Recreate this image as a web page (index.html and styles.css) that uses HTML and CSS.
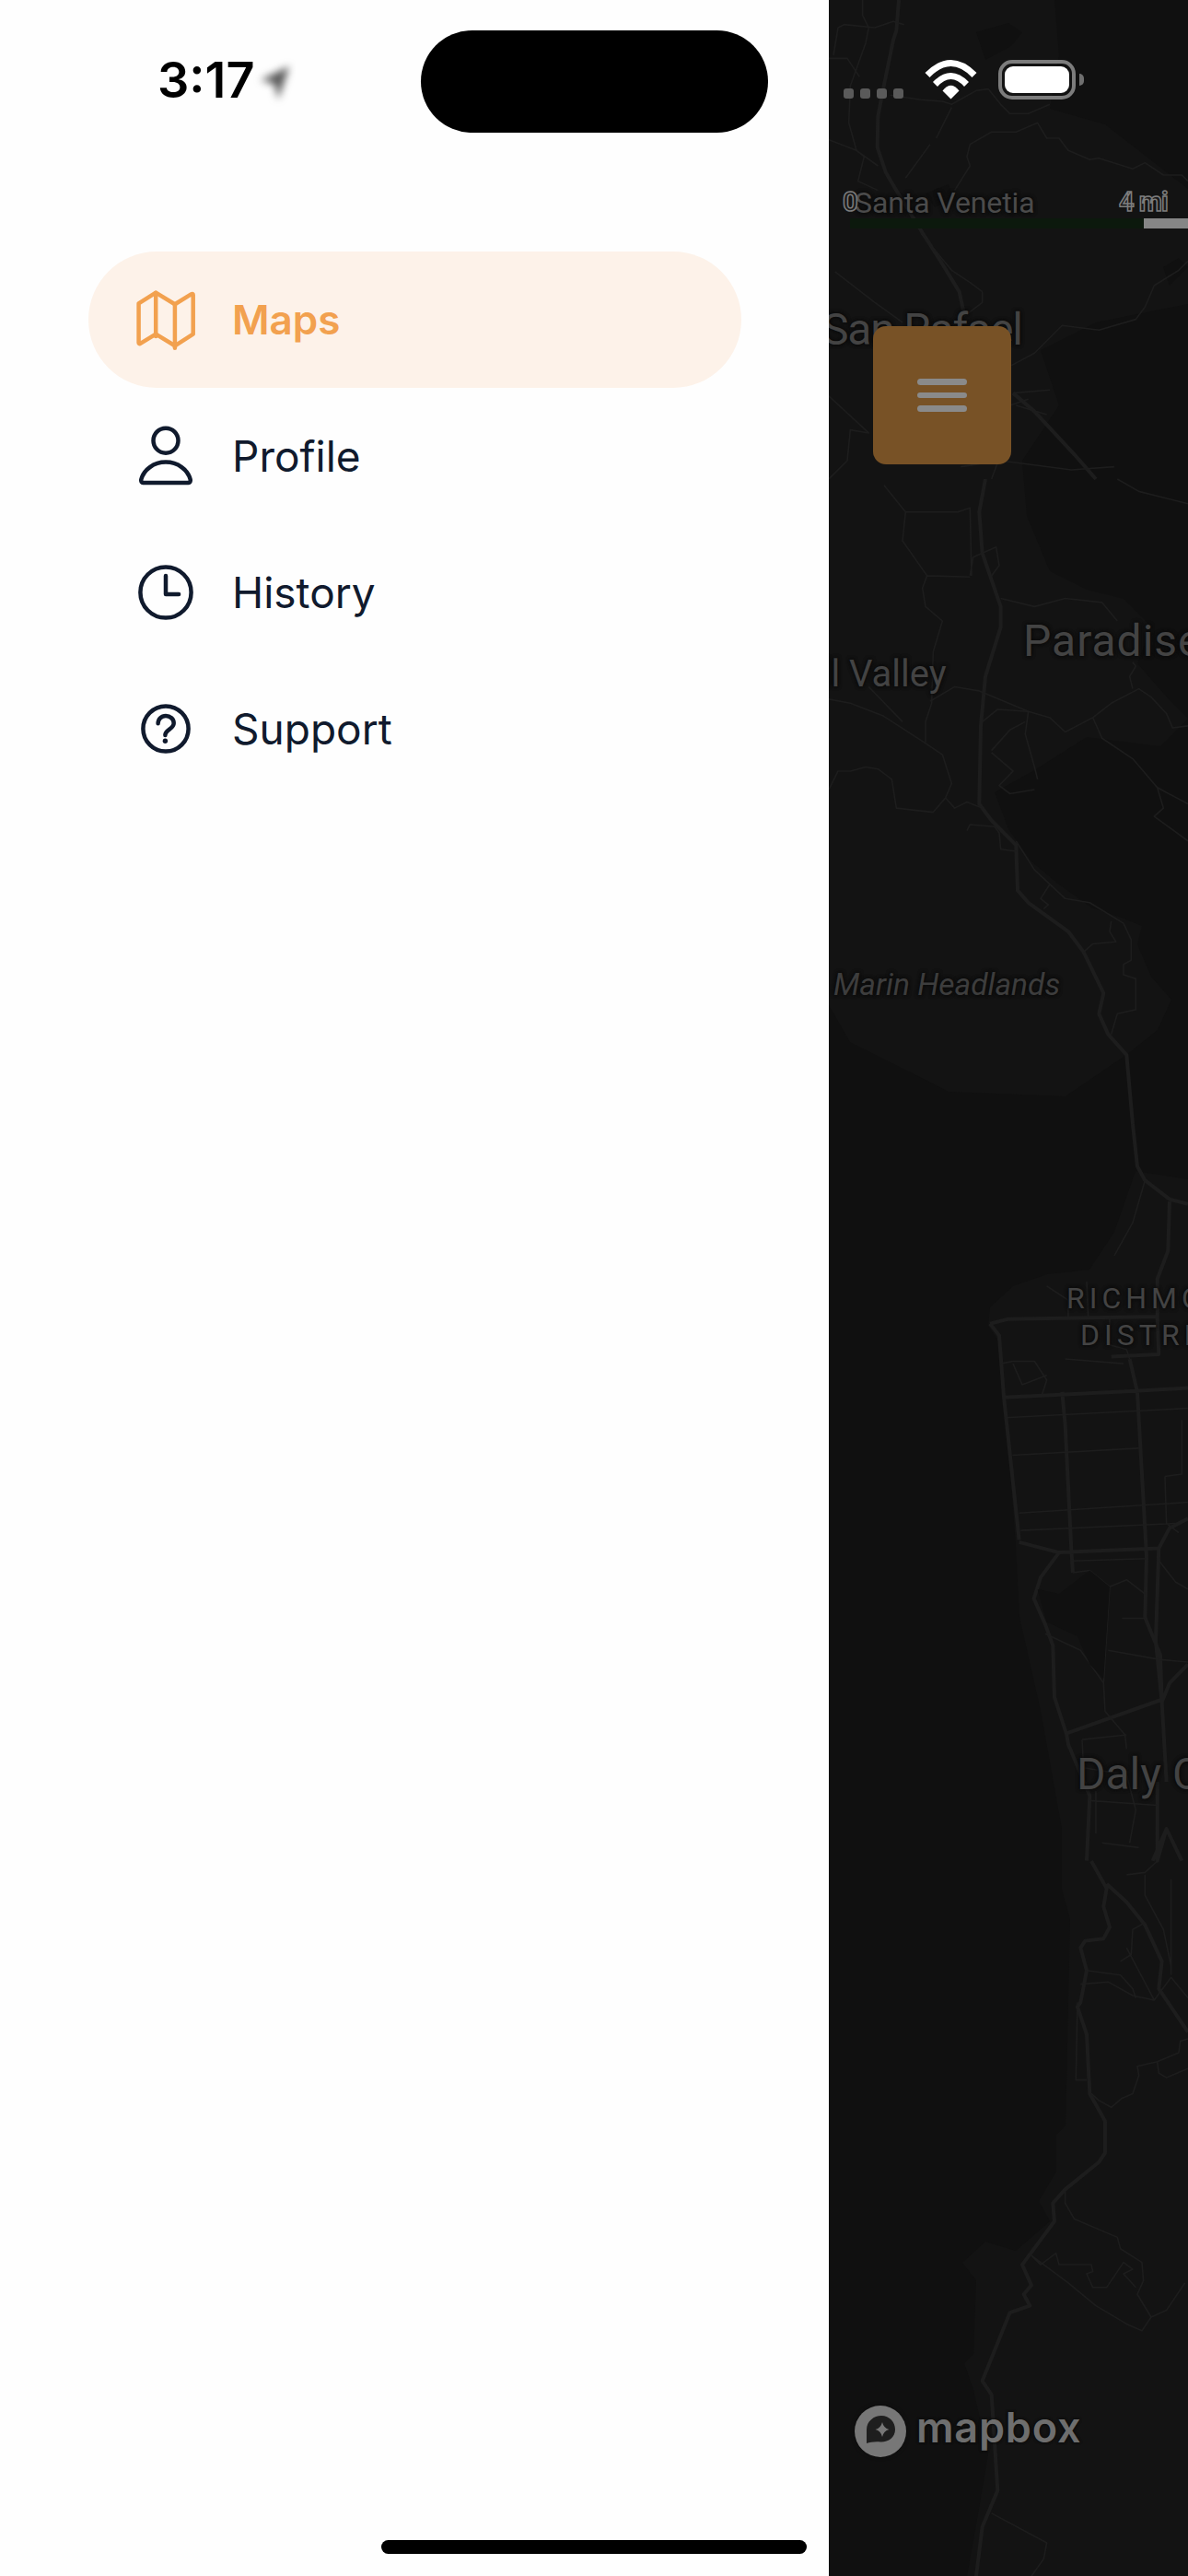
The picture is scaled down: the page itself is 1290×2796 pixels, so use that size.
FILE: index.html
```html
<!DOCTYPE html>
<html lang="en">
<head>
<meta charset="utf-8">
<title>Maps</title>
<link rel="stylesheet" href="styles.css">
</head>
<body>
<div class="app">
  <aside class="drawer">
    <div class="clock">
      <span class="time">3:17</span>
      <svg class="loc" width="50" height="56" viewBox="0 0 50 56"><path class="loc-arrow" d="M43 10 L12 25 L27 29 L31 46 Z"/></svg>
    </div>
    <nav class="menu">
      <a class="item active">
        <svg class="ico" viewBox="0 0 24 24"><g transform="translate(0 .33)"><path d="M2.2 5.800 8.400 1.900l6.900 4.200 6-3.700c.3-.2.600 0 .6.300v14.200l-6.600 4.200-6.900-4.200-5.600 3.400c-.3.2-.6 0-.6-.3z"/><path d="M8.400 1.900v15.800M15.300 6.100v15.800"/></g></svg>
        <span>Maps</span>
      </a>
      <a class="item">
        <svg class="ico" viewBox="0 0 24 24"><circle cx="12" cy="6.400" r="4.500"/><path d="M12 14.200c-4.400 0-8 2.800-8.900 6.300-.1.700.2 1.200.7 1.200h16.400c.5 0 .8-.5.700-1.200-.9-3.500-4.500-6.300-8.900-6.300z"/></svg>
        <span>Profile</span>
      </a>
      <a class="item">
        <svg class="ico" viewBox="0 0 24 24"><circle cx="12" cy="12" r="9.200"/><path d="M12 6v6.700h4.700"/></svg>
        <span>History</span>
      </a>
      <a class="item">
        <svg class="ico" viewBox="0 0 24 24"><circle cx="12" cy="12" r="8.200"/><path d="M9.200 10.100c0-1.600 1.200-2.800 2.800-2.800s2.900 1.200 2.900 2.700c0 2.100-3.100 2.300-3.100 4.300"/><circle class="dot" cx="11.800" cy="16.400" r=".9"/></svg>
        <span>Support</span>
      </a>
    </nav>
  </aside>

  <main class="map">
    <svg class="base" viewBox="900 0 390 2796" preserveAspectRatio="none">
      <path class="land" d="M900 0H1145L1150 60 1140 118 1200 135 1290 205V330L1190 350 1130 380 1150 440 1110 500 1115 560 1140 620 1180 640 1220 650 1250 680 1235 720 1270 760 1290 780 1260 810 1180 800 1125 835 1080 860 1095 900 1120 935 1150 960 1185 985 1215 995 1240 1005 1235 1025 1250 1060 1272 1085 1257 1118 1223 1145 1157 1190 1030 1185 987 1163 923 1131 900 1091Z"/>
      <path class="land" d="M1233 1271 1210 1337 1183 1378 1137 1383 1100 1396 1075 1419 1073 1439 1087 1460 1103 1679 1107 1755 1130 1857 1153 1985 1153 2050 1162 2084 1157 2307 1147 2317 1147 2357 1128 2389 1140 2411 1103 2443 1070 2433 1045 2456 1060 2475 1057 2555 1047 2565 1057 2594 1073 2664 1063 2723 1050 2796H1290V1280Z"/>
      <path class="park" d="M1060 35 1095 25 1110 35 1098 50 1070 65Z"/>
      <path class="park" d="M1263 290 1280 280 1290 290 1270 310Z"/>
      <path class="park" d="M1005 210 1030 200 1035 215 1015 225Z"/>

      <g transform="translate(890 0) scale(.3333 .3333)">
        <path class="rd" d="M258 0 250 100 240 130 205 300 190 380 188 480 215 560 250 620 330 750 400 860 455 950 470 1020"/>
        <path class="rd" d="M630 1280 700 1340 830 1480 900 1560"/>
        <path class="rt" d="M30 190H90L130 250M140 0V50L160 90 150 140 100 280 95 400 120 490 145 510 125 590 190 620M60 90 80 80 180 90 240 70 275 80M60 90 45 180M30 455 120 490 190 540"/>
        <path class="rt" d="M230 310 330 325 400 330 430 340 510 295 550 290 590 340 620 370H680L750 340"/>
        <path class="rt" d="M490 470 560 430H640L710 400 740 450H780L810 490 880 520 910 515 1020 550 1060 530 1120 570H1180L1200 590M490 470 480 510 490 540 440 620M380 450 400 410 430 350M360 470 280 580"/>
        <path class="rt" d="M1200 850 1170 880 1090 930 1060 1000 1030 1040 910 1075 790 1060 730 1120 700 1150 625 1190M530 950 490 920 430 880 380 820 330 760M50 885 180 985 270 1050M530 950V985L470 1030"/>
        <path class="rt" d="M30 1290 160 1410 100 1400 90 1500 30 1560M590 1480 560 1560M460 1520 590 1500 820 1530 960 1520M630 1280 750 1270M640 1320 740 1350M620 1320 680 1300"/>
      </g>

      <g transform="translate(890 520) scale(.3333 .4464)">
        <path class="rd" d="M540 0 520 80 530 180 590 310V360L540 480 525 600 520 790 560 830 640 890 645 1000 680 1030 810 1100 860 1150 925 1250 910 1300 940 1350 1000 1400 1020 1568"/>
        <path class="rt" d="M210 15 280 80 270 150 350 235 490 238M280 80H450L490 70 495 235M490 235 500 190 575 165 585 210 560 235M350 235 335 265 345 310 400 345 370 420 365 545 345 590V640"/>
        <path class="rt" d="M30 535 100 545 205 575 340 640 400 670 430 740 410 775 370 810 250 800 235 730 190 705 150 700 100 710H60L30 755M160 505 270 590"/>
        <path class="rt" d="M360 540 440 505 520 515 680 565 750 580 800 615 890 580 950 545 1040 510 1080 530 1130 570 1150 605 1200 600M890 580 920 630 1020 680 1100 750 1200 790M1100 750 1120 800 1090 820 1200 880"/>
        <path class="rt" d="M590 290 700 310 800 290 920 300 970 345M1020 445 1030 455 1010 480 1020 510M530 590 580 560 680 565 670 620 700 700 710 730M560 660 620 610 670 590M560 665 630 710 585 745 620 765 700 755"/>
        <path class="rt" d="M410 775 440 800 480 785 530 800M480 855 490 840 570 845 585 860 590 900 640 905M640 880 700 950 800 1020 880 1030 990 1080 1015 1120V1170L990 1180V1205L1030 1215V1290L970 1300 950 1350M950 1075 945 1100 965 1125 890 1130 860 1150M750 985 720 1020 745 1035 730 1045M970 0 1040 30 1200 60"/>
      </g>

      <g transform="translate(890 1220) scale(.3333 .51)">
        <path class="rd" d="M1020 0 1035 90 1060 120 1140 160 1200 170M1140 165 1135 270 1100 330V410M555 425 615 415 1100 410 1105 490 950 495M555 425 585 450 600 580 650 885M600 582 1030 568 1200 562M1010 500 1035 570 1065 920 1060 1050 1110 1130 1115 1230 1130 1400M790 570 800 640 820 905 825 955M650 890 780 912 1105 903 1140 860 1200 840M780 912 720 965 698 1010 735 1065 760 1110 765 1220 805 1300 810 1320 880 1430 870 1568M805 1297 1115 1225M1105 903 1095 1100 1115 1230M1115 1230 1140 1190 1200 1150M1100 1400V1568L1130 1500 1180 1568M1130 1500 1085 1568"/>
        <path class="rt" d="M605 625 1200 605M628 705 1040 690M650 828 1200 805M655 865 1160 850M820 930 1065 925M825 955 880 950 945 985 925 1190 930 1250 995 1300 1000 1330M945 985 1000 970 1060 1000M985 1052H1060M735 1085 850 1120 925 1190M940 1120 1110 1140 1200 1145M1125 750 1180 745V630M1125 750 1130 850 1170 870M1100 925 1160 975 1200 990M630 505H700L740 545 725 575M630 510 660 555 740 535M590 510 630 505M800 500 990 510M1010 500 1000 480 945 470V410M1060 120 1020 210 960 280M740 345 810 375V410M870 335 875 410M855 1310 1000 1300M855 1310 860 1370 1000 1385M900 1420V1510M1000 1385 1030 1460 1010 1530M880 1440 1100 1450M920 1530 1040 1540"/>
        <path class="park" d="M710 990 780 1000 880 950 945 985 925 1180 880 1150 840 1090 740 1060Z"/>
      </g>

      <g transform="translate(890 2020) scale(.3333 .495)">
        <path class="rd" d="M885 0 935 60 925 100 945 145 925 170 865 175 850 190 870 240 850 310 840 320 870 380 880 510 930 570V640L910 660 800 720 760 750 765 790 660 885 690 930 665 950 685 975 620 990 530 1140 560 1170 580 1380 530 1460 510 1568M935 50 1000 90 1060 140 1115 220 1105 280 1200 375"/>
        <path class="rt" d="M1000 30 1060 25 1100 0M1060 30V75L1120 150 1145 230M870 240 980 250 1020 280 1030 300M980 220 1015 205 1020 150 1060 135M850 270 940 265 1020 295 1090 305 1145 255 1200 300M840 310 835 480H870M1145 40V250M1000 190 1090 305M1200 390 1175 395 1170 420 1100 440 1035 450 1040 470 1020 510 985 520 950 540 910 525 885 510M1100 440 1105 465 1130 475 1200 455M800 725V750L830 785 970 825 980 850 1050 880 1055 920 1035 950 1080 1000 1050 1030 1000 1015 900 975 810 925 690 865M690 865 720 885 770 860 780 885H885L890 900 870 905 890 935H935L990 880 1020 895 990 905 1030 935M1080 1000 1130 985 1190 925M560 1430 740 1495 730 1530 690 1568"/>
      </g>
    </svg>

    <div class="label santa">Santa Venetia</div>
    <div class="label rafael">San Rafael</div>
    <div class="label paradise">Paradise</div>
    <div class="label mill">Mill Valley</div>
    <div class="label marin">Marin Headlands</div>
    <div class="label richmond">RICHMOND<br>DISTRICT</div>
    <div class="label daly">Daly City</div>

    <div class="scale-num zero">0</div>
    <div class="scale-num four">4 mi</div>
    <div class="scale-bar"><span class="scale-dark"></span><span class="scale-light"></span></div>

    <div class="signal"><i></i><i></i><i></i><i></i></div>
    <svg class="wifi" width="57" height="43" viewBox="0 0 57 43"><path d="M.5 14Q28.500-14 56.500 14L51.500 19Q28.500-5 5.500 19Z"/><path d="M9 24Q28.500 4 48 24L43 29Q28.500 13 14 29Z"/><path d="M19.500 33.500Q28.500 22 37.500 33.500L28.500 42.500Z"/></svg>
    <div class="battery"><span class="battery-fill"></span></div>
    <span class="battery-cap"></span>

    <button class="burger" aria-label="Menu"><i></i><i></i><i></i></button>

    <div class="mapbox">
      <svg class="mb-mark" width="56" height="56" viewBox="0 0 56 56"><circle class="mb-disc" cx="28" cy="28" r="28"/><path class="mb-pin" d="M13 41V26C13 17 21 11 29 11 38 11 44 18 44 26 44 35 36 40 28 39.500 21 39 17 40 13 41Z"/><path class="mb-disc" d="M30 18Q31.500 24.500 37.500 26 31.500 27.500 30 34 28.500 27.500 22.500 26 28.500 24.500 30 18Z"/></svg>
      <span class="mb-word">mapbox</span>
    </div>
  </main>

  <div class="island"></div>
  <div class="home"></div>
</div>
</body>
</html>
```

FILE: styles.css
```css
* { box-sizing: border-box; }
html, body { margin: 0; padding: 0; background: #fff; }
body { width: 1290px; height: 2796px; overflow: hidden; font-family: Inter, "Liberation Sans", sans-serif; }
.app { position: relative; display: flex; width: 1290px; height: 2796px; }

.drawer { width: 900px; flex: none; background: #fefefe; padding: 0 95px 0 96px; }
.clock { display: flex; align-items: center; height: 273px; padding: 0 0 99px 75px; }
.time { font-size: 54px; line-height: 62px; font-weight: 600; color: #000; letter-spacing: 0; }
.loc { flex: none; margin-top: 6px; margin-left: -6px; }
.loc-arrow { fill: #555; filter: blur(4px); }

.menu { display: flex; flex-direction: column; }
.item { display: flex; align-items: center; gap: 36px; height: 148px; padding-left: 48px; border-radius: 74px; color: #101a2d; font-size: 46px; font-weight: 400; }
.item.active { background: #fdf2e9; color: #f2a14f; font-size: 44px; font-weight: 600; }
.ico { width: 72px; height: 72px; flex: none; fill: none; stroke: currentColor; stroke-width: 1.5; stroke-linecap: round; stroke-linejoin: round; }
.ico .dot { fill: currentColor; stroke: none; }

.map { position: relative; flex: 1; overflow: hidden; background: #101010; }
.base { position: absolute; inset: 0; width: 390px; height: 2796px; }
.land { fill: #131313; }
.park { fill: #101010; }
.rd, .rt { fill: none; stroke: #1d1d1d; stroke-linejoin: round; vector-effect: non-scaling-stroke; }
.rd { stroke-width: 4px; }
.rt { stroke-width: 1.6px; }

.label { position: absolute; white-space: nowrap; font-family: Roboto, "Liberation Sans", sans-serif; color: #434343; text-shadow: 0 0 4px #090909, 0 0 4px #090909; }
.santa { left: 28px; top: 200px; font-size: 32px; line-height: 40px; letter-spacing: -.1px; color: #4b4b4b; }
.rafael { left: -7px; top: 330px; font-size: 48px; line-height: 56px; letter-spacing: -1.200px; }
.paradise { left: 211px; top: 668px; font-size: 48px; line-height: 56px; letter-spacing: 1px; }
.mill { left: -52px; top: 708px; font-size: 40px; line-height: 48px; }
.marin { left: 5px; top: 1048px; font-size: 33.500px; line-height: 42px; font-style: italic; color: #3d3d3d; }
.richmond { left: 258px; top: 1389px; font-size: 32px; line-height: 40px; letter-spacing: 5px; text-align: center; }
.daly { left: 269px; top: 1898px; font-size: 48px; line-height: 56px; }

.scale-num { position: absolute; top: 204px; font-family: Roboto, sans-serif; font-weight: 700; font-size: 29px; line-height: 30px; color: #1a1a1a; -webkit-text-stroke: 1.500px #7d7d7d; }
.zero { left: 15px; }
.four { left: 315px; letter-spacing: -1px; }
.scale-bar { position: absolute; left: 23px; top: 237px; display: flex; width: 367px; height: 11px; }
.scale-dark { width: 319px; background: #0c190d; }
.scale-light { flex: 1; background: #868686; }

.signal { position: absolute; left: 16px; top: 96px; display: flex; gap: 7px; }
.signal i { width: 11px; height: 11px; border-radius: 3px; background: #5a5a5a; }
.wifi { position: absolute; left: 104px; top: 65px; fill: #fff; }
.battery { position: absolute; left: 184px; top: 65px; width: 84px; height: 43px; padding: 3px 3px; border: 4px solid #7c7c7c; border-radius: 15px; }
.battery-fill { display: block; width: 100%; height: 100%; background: #fff; border-radius: 9px; }
.battery-cap { position: absolute; left: 272px; top: 80px; width: 5px; height: 13px; background: #6f6f6f; border-radius: 0 5px 5px 0; }

.burger { position: absolute; left: 48px; top: 354px; width: 150px; height: 150px; padding: 0; border: 0; border-radius: 14px; background: #785226; display: flex; flex-direction: column; align-items: center; justify-content: center; gap: 8px; }
.burger i { display: block; width: 54px; height: 6.500px; border-radius: 4px; background: #8a8a8a; }

.mapbox { position: absolute; left: 28px; top: 2611px; display: flex; align-items: flex-start; gap: 11px; }
.mb-mark { flex: none; filter: drop-shadow(0 0 2px #0a0a0a); }
.mb-disc { fill: #777; }
.mb-pin { fill: #1e1e1e; }
.mb-word { margin-top: -4px; font-family: Inter, sans-serif; font-weight: 600; font-size: 45px; line-height: 56px; color: #6e6e6e; letter-spacing: .8px; text-shadow: 0 0 3px #0a0a0a, 0 0 3px #0a0a0a; }

.island { position: absolute; left: 457px; top: 33px; width: 377px; height: 111px; border-radius: 56px; background: #000; }
.home { position: absolute; left: 414px; top: 2757px; width: 462px; height: 15px; border-radius: 8px; background: #000; }
```
